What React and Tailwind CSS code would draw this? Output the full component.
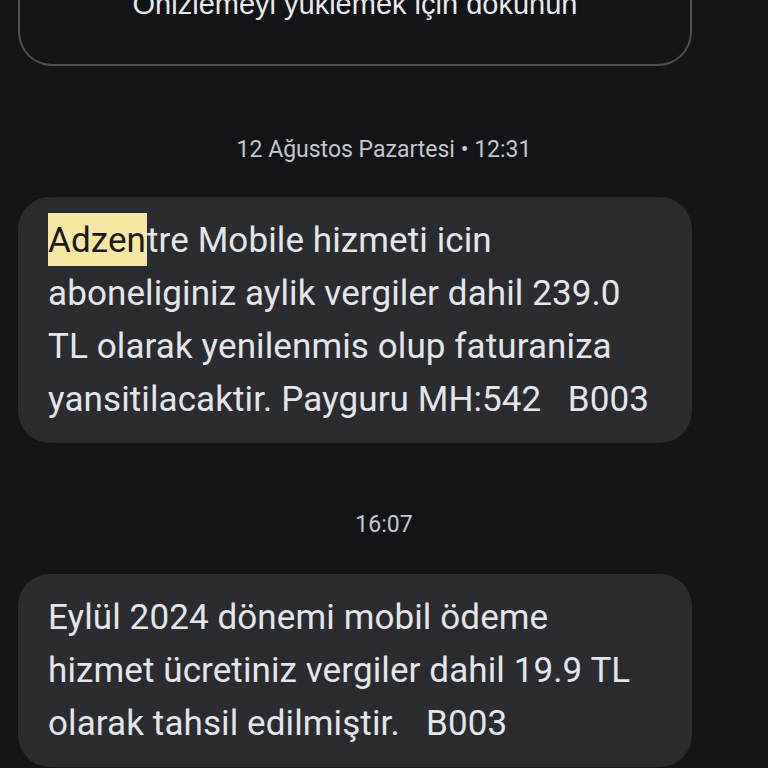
import React from "react";

const Bubble = ({ children }) => (
    <div className="mx-[18px] w-[674px] rounded-[32px] bg-[#2a2c30] px-[30px] pt-[17px] pb-[17px] text-[35px] leading-[53px] tracking-[0.1px] text-[#e4e5e8]">
        {children}
    </div>
);

const Stamp = ({ children }) => (
    <div className="text-center text-[23px] leading-[24px] text-[#c3c6cb]">{children}</div>
);

const App = () => {
    return (
        <div className="h-[768px] w-[768px] overflow-hidden bg-[#121417] font-['Roboto','Noto_Sans',sans-serif]">
            {/* link preview kartı */}
            <div className="mx-[18px] -mt-[60px] flex h-[126px] w-[674px] items-start justify-center rounded-b-[34px] border-2 border-t-0 border-[#4d4f53] pt-[48px]">
                <span className="font-['Liberation_Sans',sans-serif] text-[29px] leading-[32px] text-[#e8e8e8]">
                    Önizlemeyi yüklemek için dokunun
                </span>
            </div>

            <div className="mt-[72px]">
                <Stamp>12 Ağustos Pazartesi • 12:31</Stamp>
            </div>

            <div className="mt-[35px]">
                <Bubble>
                    <span className="bg-[#f6e8a2] pt-[7px] pb-[5px] pr-[1px] text-[#1a1a1a]">Adzen</span>tre Mobile hizmeti icin
                    <br />
                    aboneliginiz aylik vergiler dahil 239.0
                    <br />
                    TL olarak yenilenmis olup faturaniza
                    <br />
                    yansitilacaktir. Payguru MH:542&nbsp;&nbsp;&nbsp;B003
                </Bubble>
            </div>

            <div className="mt-[70px]">
                <Stamp>16:07</Stamp>
            </div>

            <div className="mt-[37px]">
                <Bubble>
                    Eylül 2024 dönemi mobil ödeme
                    <br />
                    hizmet ücretiniz vergiler dahil 19.9 TL
                    <br />
                    olarak tahsil edilmiştir.&nbsp;&nbsp;&nbsp;B003
                </Bubble>
            </div>
        </div>
    );
};

export default App;
